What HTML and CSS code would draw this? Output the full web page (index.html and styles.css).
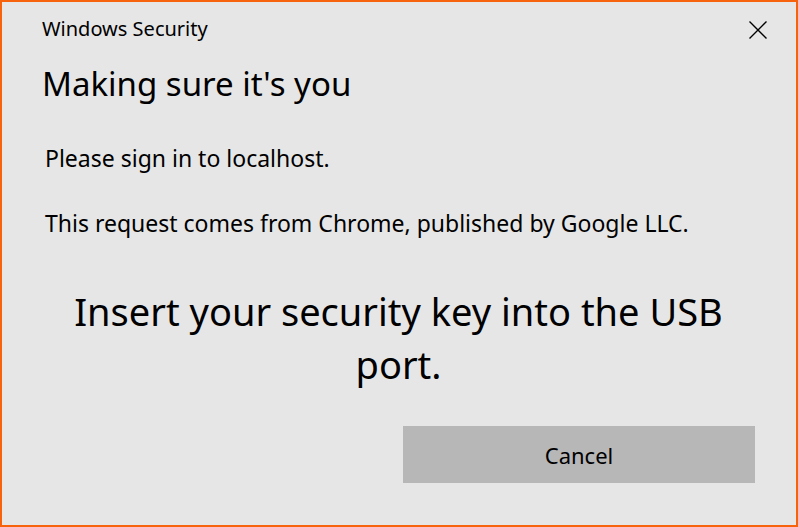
FILE: index.html
```html
<!DOCTYPE html>
<html lang="en">
<head>
<meta charset="utf-8">
<title>Windows Security</title>
<link rel="stylesheet" href="styles.css">
</head>
<body>
<div class="dialog">
  <div class="header">
    <div class="title">Windows Security</div>
    <button class="close" aria-label="Close">
      <svg width="18" height="18" viewBox="0 0 18 18"><path d="M0.5 0.5 L17.5 17.5 M17.5 0.5 L0.5 17.5" stroke="#000" stroke-width="1.4" fill="none"/></svg>
    </button>
  </div>
  <h1 class="heading">Making sure it's you</h1>
  <p class="text first">Please sign in to localhost.</p>
  <p class="text second">This request comes from Chrome, published by Google LLC.</p>
  <p class="prompt">Insert your security key into the USB port.</p>
  <div class="actions">
    <button class="cancel">Cancel</button>
  </div>
</div>
</body>
</html>
```
FILE: styles.css
```css
html, body {
  margin: 0;
  padding: 0;
}
body {
  font-family: "Noto Sans", "Open Sans", sans-serif;
  color: #000;
  background: #e6e6e6;
}
.dialog {
  box-sizing: border-box;
  width: 798px;
  height: 527px;
  border: 2px solid #f7630c;
  background: #e6e6e6;
  padding: 0 41px 0 40px;
  overflow: hidden;
}
.header {
  display: flex;
  justify-content: space-between;
  align-items: flex-start;
  margin-right: -12px;
  padding-top: 15px;
}
.title {
  font-size: 20px;
  line-height: 24px;
}
.close {
  border: 0;
  background: none;
  padding: 0;
  margin-top: 4px;
  width: 18px;
  height: 18px;
  display: block;
}
.close svg {
  display: block;
}
.heading {
  font-weight: normal;
  font-size: 33px;
  line-height: 44px;
  margin: 21px 0 0;
}
.text {
  font-size: 23px;
  line-height: 28px;
  margin: 0;
  padding-left: 3px;
}
.first {
  margin-top: 38px;
}
.second {
  margin-top: 37px;
}
.prompt {
  font-size: 38px;
  line-height: 53px;
  text-align: center;
  margin: 48px 0 0;
}
.actions {
  display: flex;
  justify-content: flex-end;
  margin-top: 35px;
}
.cancel {
  width: 352px;
  height: 57px;
  border: 0;
  background: #b7b7b7;
  font-family: inherit;
  font-size: 22px;
  color: #000;
  padding: 0;
}
```
